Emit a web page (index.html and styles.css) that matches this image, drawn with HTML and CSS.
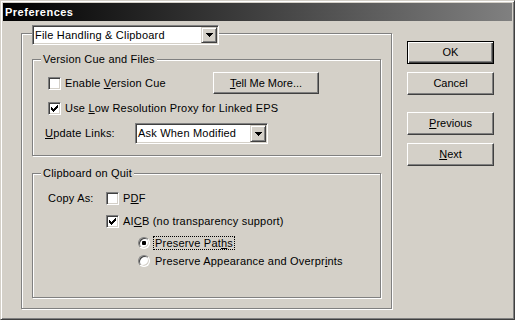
FILE: index.html
```html
<!DOCTYPE html>
<html lang="en">
<head>
    <meta charset="UTF-8">
    <title>Preferences</title>
    <link rel="stylesheet" href="styles.css">
</head>
<body>
    <div class="window">
        <div class="titlebar">Preferences</div>
        <div class="client">
            <div class="outer">
                <div class="select select-head">
                    <span class="select-text">File Handling &amp; Clipboard</span>
                    <span class="select-btn"><svg width="7" height="4" viewBox="0 0 7 4"><path d="M0 0h7v1H0zM1 1h5v1H1zM2 2h3v1H2zM3 3h1v1H3z"/></svg></span>
                </div>

                <div class="group group-files">
                    <div class="legend">Version Cue and Files</div>
                    <div class="row row-cue">
                        <label class="check check-cue">
                            <span class="checkbox"></span>
                            <span>Enable <u>V</u>ersion Cue</span>
                        </label>
                        <button class="btn btn-more"><u>T</u>ell Me More...</button>
                    </div>
                    <div class="row row-proxy">
                        <label class="check">
                            <span class="checkbox"><svg width="7" height="7" viewBox="0 0 7 7"><path d="M0 2h1v3H0zM1 3h1v3H1zM2 4h1v3H2zM3 3h1v3H3zM4 2h1v3H4zM5 1h1v3H5zM6 0h1v3H6z"/></svg></span>
                            <span>Use <u>L</u>ow Resolution Proxy for Linked EPS</span>
                        </label>
                    </div>
                    <div class="row row-links">
                        <span class="field-label"><u>U</u>pdate Links:</span>
                        <div class="select select-links">
                            <span class="select-text">Ask When Modified</span>
                            <span class="select-btn"><svg width="7" height="4" viewBox="0 0 7 4"><path d="M0 0h7v1H0zM1 1h5v1H1zM2 2h3v1H2zM3 3h1v1H3z"/></svg></span>
                        </div>
                    </div>
                </div>

                <div class="group group-clip">
                    <div class="legend">Clipboard on Quit</div>
                    <div class="row row-pdf">
                        <span class="copy-label">Copy As:</span>
                        <label class="check">
                            <span class="checkbox"></span>
                            <span>P<u>D</u>F</span>
                        </label>
                    </div>
                    <div class="row row-aicb">
                        <label class="check">
                            <span class="checkbox"><svg width="7" height="7" viewBox="0 0 7 7"><path d="M0 2h1v3H0zM1 3h1v3H1zM2 4h1v3H2zM3 3h1v3H3zM4 2h1v3H4zM5 1h1v3H5zM6 0h1v3H6z"/></svg></span>
                            <span>AI<u>C</u>B (no transparency support)</span>
                        </label>
                    </div>
                    <div class="row row-radio row-paths">
                        <label class="radio-item">
                            <span class="radio"><span class="dot"></span></span>
                            <span class="radio-text focused">Preserve Pat<u>h</u>s</span>
                        </label>
                    </div>
                    <div class="row row-radio row-appear">
                        <label class="radio-item">
                            <span class="radio"></span>
                            <span class="radio-text">Preserve Appearance and Overpr<u>i</u>nts</span>
                        </label>
                    </div>
                </div>
            </div>

            <div class="buttons">
                <button class="btn btn-side btn-default">OK</button>
                <button class="btn btn-side btn-cancel">Cancel</button>
                <button class="btn btn-side btn-prev"><u>P</u>revious</button>
                <button class="btn btn-side btn-next"><u>N</u>ext</button>
            </div>
        </div>
    </div>
</body>
</html>
```

FILE: styles.css
```css
* {
    box-sizing: border-box;
}

body {
    margin: 0;
    background-color: #d4d0c8;
    font-family: "Liberation Sans", Arial, sans-serif;
    font-size: 11px;
    letter-spacing: 0.2px;
    line-height: 13px;
    color: #000;
}

u {
    text-decoration: underline;
    text-underline-offset: 1px;
}

.window {
    width: 515px;
    height: 320px;
    padding: 2px;
    background-color: #d4d0c8;
    border: 1px solid;
    border-color: #d4d0c8 #404040 #404040 #d4d0c8;
    box-shadow: inset 1px 1px #fff, inset -1px -1px #808080;
}

.titlebar {
    height: 18px;
    padding-left: 2px;
    background: linear-gradient(to right, #000, #808080);
    color: #fff;
    font-weight: bold;
    letter-spacing: 0.5px;
    line-height: 18px;
}

.client {
    display: flex;
    padding-left: 18px;
}

/* etched group boxes */
.outer,
.group {
    border: 1px solid #808080;
    box-shadow: inset 1px 1px #fff, 1px 1px #fff;
}

.outer {
    margin-top: 12px;
    width: 371px;
    height: 276px;
    padding: 0 10px;
}

.group-files {
    margin-top: 14px;
    height: 97px;
}

.group-clip {
    margin-top: 17px;
    height: 125px;
}

.legend {
    width: fit-content;
    margin: -7px 0 0 8px;
    padding: 0 2px;
    background-color: #d4d0c8;
}

/* combo boxes */
.select {
    display: flex;
    height: 21px;
    background-color: #fff;
    border: 1px solid;
    border-color: #808080 #fff #fff #808080;
    box-shadow: inset 1px 1px #404040, inset -1px -1px #d4d0c8;
    padding: 1px;
}

.select-head {
    width: 187px;
    height: 20px;
    margin-top: -9px;
}

.select-links {
    width: 133px;
}

.select-text {
    flex: 1;
    padding-left: 1px;
    align-self: center;
}

.select-btn {
    display: flex;
    align-items: center;
    justify-content: center;
    width: 16px;
    background-color: #d4d0c8;
    border: 1px solid;
    border-color: #d4d0c8 #404040 #404040 #d4d0c8;
    box-shadow: inset 1px 1px #fff, inset -1px -1px #808080;
}

.select-btn svg {
    display: block;
}

/* rows */
.row {
    display: flex;
    align-items: center;
}

.row-cue {
    margin-top: 6px;
    height: 22px;
    padding-left: 15px;
}

.row-proxy {
    margin-top: 8px;
    height: 13px;
    padding-left: 15px;
}

.row-links {
    margin-top: 8px;
    height: 21px;
    padding-left: 12px;
}

.row-pdf {
    margin-top: 12px;
    height: 13px;
    padding-left: 15px;
}

.row-aicb {
    margin-top: 10px;
    height: 13px;
    padding-left: 73px;
}

.row-radio {
    height: 14px;
    padding-left: 105px;
}

.row-paths {
    margin-top: 8px;
}

.row-appear {
    margin-top: 4px;
}

.field-label {
    width: 90px;
}

.copy-label {
    width: 58px;
}

/* checkboxes */
.check {
    display: flex;
    align-items: center;
    gap: 4px;
}

.check-cue {
    width: 165px;
}

.checkbox {
    width: 13px;
    height: 13px;
    padding: 2px;
    background-color: #fff;
    border: 1px solid;
    border-color: #808080 #fff #fff #808080;
    box-shadow: inset 1px 1px #404040, inset -1px -1px #d4d0c8;
}

.checkbox svg {
    display: block;
}

/* radio buttons */
.radio-item {
    display: flex;
    align-items: center;
}

.radio {
    display: flex;
    align-items: center;
    justify-content: center;
    width: 12px;
    height: 12px;
    border-radius: 50%;
    background-color: #fff;
    border: 1px solid;
    border-color: #808080 #fff #fff #808080;
    box-shadow: inset 1px 1px #404040, inset -1px -1px #d4d0c8;
}

.dot {
    width: 4px;
    height: 4px;
    border-radius: 1px;
    background-color: #000;
}

.radio-text {
    height: 14px;
    margin-left: 3px;
    padding: 0 1px;
    border: 1px solid transparent;
    line-height: 12px;
}

.radio-text.focused {
    border: 1px dotted #000;
}

/* push buttons */
.btn {
    font: inherit;
    color: #000;
    padding: 0;
    background-color: #d4d0c8;
    border: 1px solid;
    border-color: #fff #404040 #404040 #fff;
    box-shadow: inset -1px -1px #808080;
}

.btn-more {
    width: 106px;
    height: 22px;
}

.buttons {
    display: flex;
    flex-direction: column;
    margin-left: 15px;
    padding-top: 20px;
}

.btn-side {
    width: 87px;
    height: 23px;
}

.btn-default {
    border-color: #000;
    box-shadow: inset 1px 1px #fff, inset -1px -1px #404040, inset -2px -2px #808080;
}

.btn-cancel {
    margin-top: 8px;
}

.btn-prev {
    margin-top: 17px;
}

.btn-next {
    margin-top: 8px;
}
```
